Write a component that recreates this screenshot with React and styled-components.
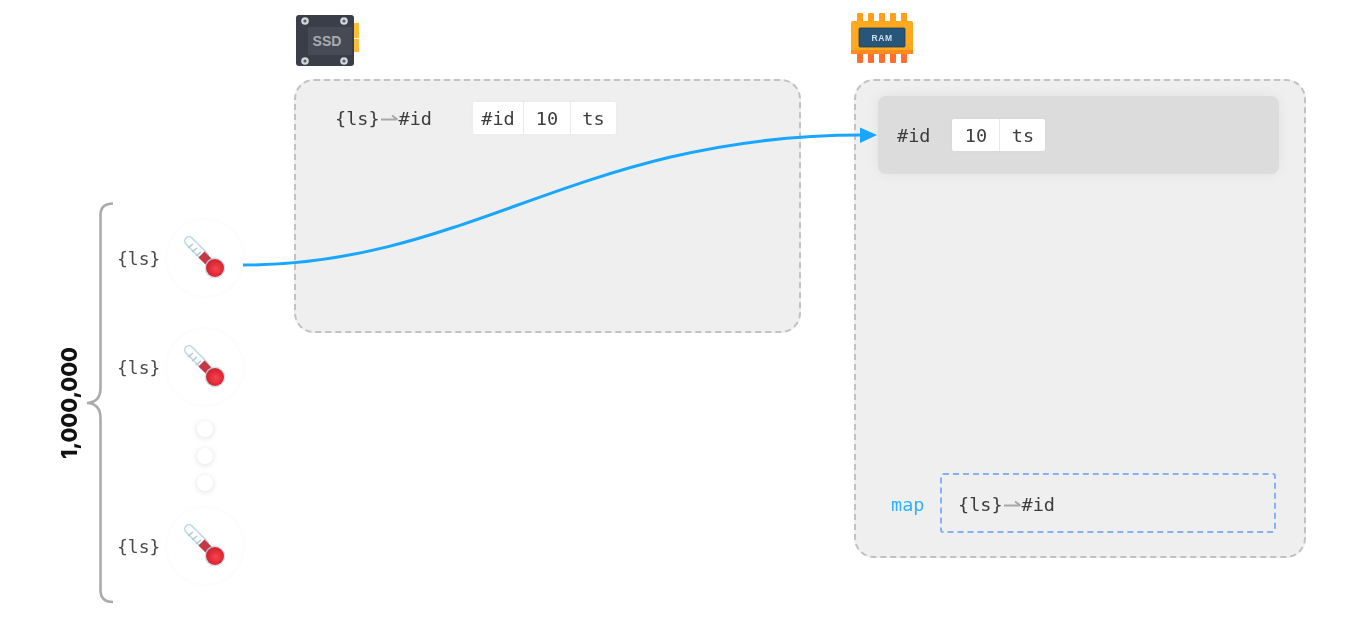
import React from 'react';
import styled, { createGlobalStyle } from 'styled-components';

const Global = createGlobalStyle`
html, body { margin: 0; background: #fff; }
body { font-family: "DejaVu Sans Mono", monospace; }
`

const Stage = styled.div`
position: relative;
width: 1352px;
height: 620px;
overflow: hidden;
box-sizing: border-box;
padding-left: 56px;
display: grid;
grid-template-columns: 238px 560px 452px;
align-items: start;
filter: blur(0.6px);
`

const Fleet = styled.div`
display: flex;
align-items: flex-start;
margin-top: 200px;
`

const CountSlot = styled.div`
width: 26px;
height: 405px;
display: flex;
align-items: center;
justify-content: center;
`

const Count = styled.div`
font-family: Inter, sans-serif;
font-weight: 800;
font-size: 21.5px;
color: #111;
writing-mode: vertical-rl;
transform: rotate(180deg);
white-space: nowrap;
`

const BraceSvg = styled.svg`
width: 30px;
height: 405px;
flex: none;
margin-left: 3px;
`

const Sensors = styled.div`
display: flex;
flex-direction: column;
align-items: flex-end;
margin: 20px 0 0 2px;
`

const Sensor = styled.div`
display: flex;
align-items: center;
gap: 7px;
margin-bottom: ${p => p.$after}px;
`

const Key = styled.span`
font-size: 18px;
color: #4a4a4a;
width: 43px;
padding-top: 1px;
white-space: nowrap;
`

const Bubble = styled.div`
width: 76px;
height: 76px;
border-radius: 50%;
background: #fff;
box-shadow: 0 0 5px rgba(0, 0, 0, 0.035);
`

const Dots = styled.div`
display: flex;
flex-direction: column;
gap: 11px;
width: 76px;
align-items: center;
margin-bottom: 17px;
`

const Dot = styled.div`
width: 16px;
height: 16px;
border-radius: 50%;
background: #fff;
box-shadow: 0 1px 6px rgba(0, 0, 0, 0.13);
`

const Store = styled.div`
display: flex;
flex-direction: column;
align-items: flex-start;
`

const ChipIcon = styled.svg`
display: block;
flex: none;
margin: ${p => p.$margin};
`

const Panel = styled.div`
box-sizing: border-box;
width: ${p => p.$w}px;
height: ${p => p.$h}px;
background: #efefef;
border: 2px dashed #c2c2c2;
border-radius: 20px;
display: flex;
flex-direction: column;
justify-content: space-between;
`

const Row = styled.div`
display: flex;
align-items: center;
`

const SsdRow = styled(Row)`
padding: 21px 0 0 39px;
`

const Mono = styled.span`
font-size: 18.5px;
color: #3c3c3c;
white-space: nowrap;
display: inline-flex;
align-items: center;
`

const Tuple = styled.div`
display: flex;
height: 32px;
background: #fff;
border-radius: 2px;
box-shadow: 0 0 4px rgba(0, 0, 0, 0.03);
margin-left: ${p => p.$left}px;
`

const Cell = styled.div`
box-sizing: border-box;
width: ${p => p.$w}px;
display: flex;
align-items: center;
justify-content: center;
font-size: 18.5px;
color: #3c3c3c;
& + & { border-left: 1px solid #e8e8f0; }
`

const Cache = styled(Row)`
box-sizing: border-box;
height: 78px;
margin: 15px 25px 0 22px;
padding-left: 19px;
background: #dcdcdc;
border-radius: 8px;
box-shadow: 0 0 14px rgba(0, 0, 0, 0.06);
`

const MapRow = styled(Row)`
margin: 0 28px 23px 35px;
`

const MapLabel = styled.span`
font-size: 18.5px;
color: #2fb1ff;
width: 49px;
padding-top: 2px;
`

const MapBox = styled(Row)`
box-sizing: border-box;
flex: 1;
height: 60px;
padding: 2px 0 0 16px;
border: 2px dashed #82b2fa;
border-radius: 3px;
`

const Flow = styled.svg`
position: absolute;
left: 0;
top: 0;
width: 1352px;
height: 620px;
pointer-events: none;
`

const Thermometer = () => (
    <svg width="76" height="76" viewBox="0 0 76 76">
        <defs>
            <radialGradient id="bulb" cx="0.55" cy="0.55" r="0.6">
                <stop offset="0" stopColor="#f7444e" />
                <stop offset="0.7" stopColor="#dc2632" />
                <stop offset="1" stopColor="#b9333e" />
            </radialGradient>
        </defs>
        <path d="M22 21 L37 36" stroke="#bcd7e4" strokeWidth="10" strokeLinecap="round" />
        <path d="M22 21 L37 36" stroke="#fdfeff" strokeWidth="7" strokeLinecap="round" />
        <path d="M21 28 l5 -4 M25 32 l5 -4 M29 36 l5 -4" stroke="#b6c6cf" strokeWidth="1.6" />
        <path d="M34.5 34.5 L47 47" stroke="#c33a44" strokeWidth="8.5" />
        <circle cx="48" cy="48" r="10.4" fill="#c8d8e2" opacity="0.8" />
        <circle cx="48" cy="48" r="9" fill="url(#bulb)" />
    </svg>
)

const SsdIcon = () => (
    <ChipIcon $margin="15px 0 13px 2px" width="63" height="51" viewBox="0 0 63 51">
        <rect x="58" y="8" width="5" height="15" fill="#fbbd3a" />
        <rect x="58" y="24" width="5" height="13" fill="#fbbd3a" />
        <rect x="0" y="0" width="58" height="51" rx="3" fill="#393e49" />
        <rect x="12" y="12" width="44" height="28" fill="#454a54" />
        {[[9, 6], [48, 6], [9, 46], [48, 46]].map(([x, y]) => (
            <g key={`${x}-${y}`}>
                <circle cx={x} cy={y} r="3.8" fill="#d4d7db" />
                <circle cx={x} cy={y} r="1.6" fill="#5a5e68" />
            </g>
        ))}
        <text x="31" y="31" textAnchor="middle" fontFamily="Liberation Sans, sans-serif" fontWeight="700" fontSize="14" fill="#a8abb1">SSD</text>
    </ChipIcon>
)

const RamIcon = () => (
    <ChipIcon $margin="12px 0 16px -3px" width="62" height="51" viewBox="0 0 62 51">
        {[6, 17, 28, 39, 50].map(x => (
            <g key={x}>
                <rect x={x} y="1" width="6" height="9" rx="1" fill="#ff9f1c" />
                <rect x={x} y="41" width="6" height="10" rx="1" fill="#ff6f2c" />
            </g>
        ))}
        <rect x="0" y="9" width="62" height="33" rx="2" fill="#ffa920" />
        <rect x="0" y="38" width="62" height="4" fill="#ff8b1f" />
        <rect x="8" y="16" width="46" height="19" rx="1" fill="#27567a" stroke="#1f3f57" strokeWidth="0.8" />
        <text x="31" y="28.5" textAnchor="middle" fontFamily="Liberation Sans, sans-serif" fontWeight="700" fontSize="8.5" letterSpacing="0.6" fill="#cfdde6">RAM</text>
    </ChipIcon>
)

const MapsTo = () => (
    <svg width="19" height="12" viewBox="0 0 19 12">
        <path d="M1 7.5 H17 M12 3.5 L17.5 7.5" stroke="#a8a8a8" strokeWidth="2" fill="none" />
    </svg>
)

const Mapping = () => (
    <Mono>{'{ls}'}<MapsTo />#id</Mono>
)

const App = () => {
    return (
        <Stage>
            <Global />
            <Fleet>
                <CountSlot><Count>1,000,000</Count></CountSlot>
                <BraceSvg viewBox="0 0 30 405">
                    <path d="M28 3.5 C20 3.5 15.5 7 15.5 15 V188 C15.5 197 11 202.5 2 203 C11 203.5 15.5 209 15.5 218 V390 C15.5 398 20 402 28 402" stroke="#ababab" strokeWidth="2.6" fill="none" />
                </BraceSvg>
                <Sensors>
                    <Sensor $after={33}><Key>{'{ls}'}</Key><Bubble><Thermometer /></Bubble></Sensor>
                    <Sensor $after={16}><Key>{'{ls}'}</Key><Bubble><Thermometer /></Bubble></Sensor>
                    <Dots><Dot /><Dot /><Dot /></Dots>
                    <Sensor $after={0}><Key>{'{ls}'}</Key><Bubble><Thermometer /></Bubble></Sensor>
                </Sensors>
            </Fleet>
            <Store>
                <SsdIcon />
                <Panel $w={507} $h={254}>
                    <SsdRow>
                        <Mapping />
                        <Tuple $left={41}>
                            <Cell $w={50}>#id</Cell>
                            <Cell $w={47}>10</Cell>
                            <Cell $w={46}>ts</Cell>
                        </Tuple>
                    </SsdRow>
                </Panel>
            </Store>
            <Store>
                <RamIcon />
                <Panel $w={452} $h={479}>
                    <Cache>
                        <Mono>#id</Mono>
                        <Tuple $left={22}>
                            <Cell $w={47}>10</Cell>
                            <Cell $w={46}>ts</Cell>
                        </Tuple>
                    </Cache>
                    <MapRow>
                        <MapLabel>map</MapLabel>
                        <MapBox><Mapping /></MapBox>
                    </MapRow>
                </Panel>
            </Store>
            <Flow viewBox="0 0 1352 620">
                <path d="M243 265 C470 265 580 135 862 135" stroke="#18a6ff" strokeWidth="3" fill="none" />
                <path d="M860 127.5 L877 135 L860 143 Z" fill="#18a6ff" />
            </Flow>
        </Stage>
    );
}

export default App;
